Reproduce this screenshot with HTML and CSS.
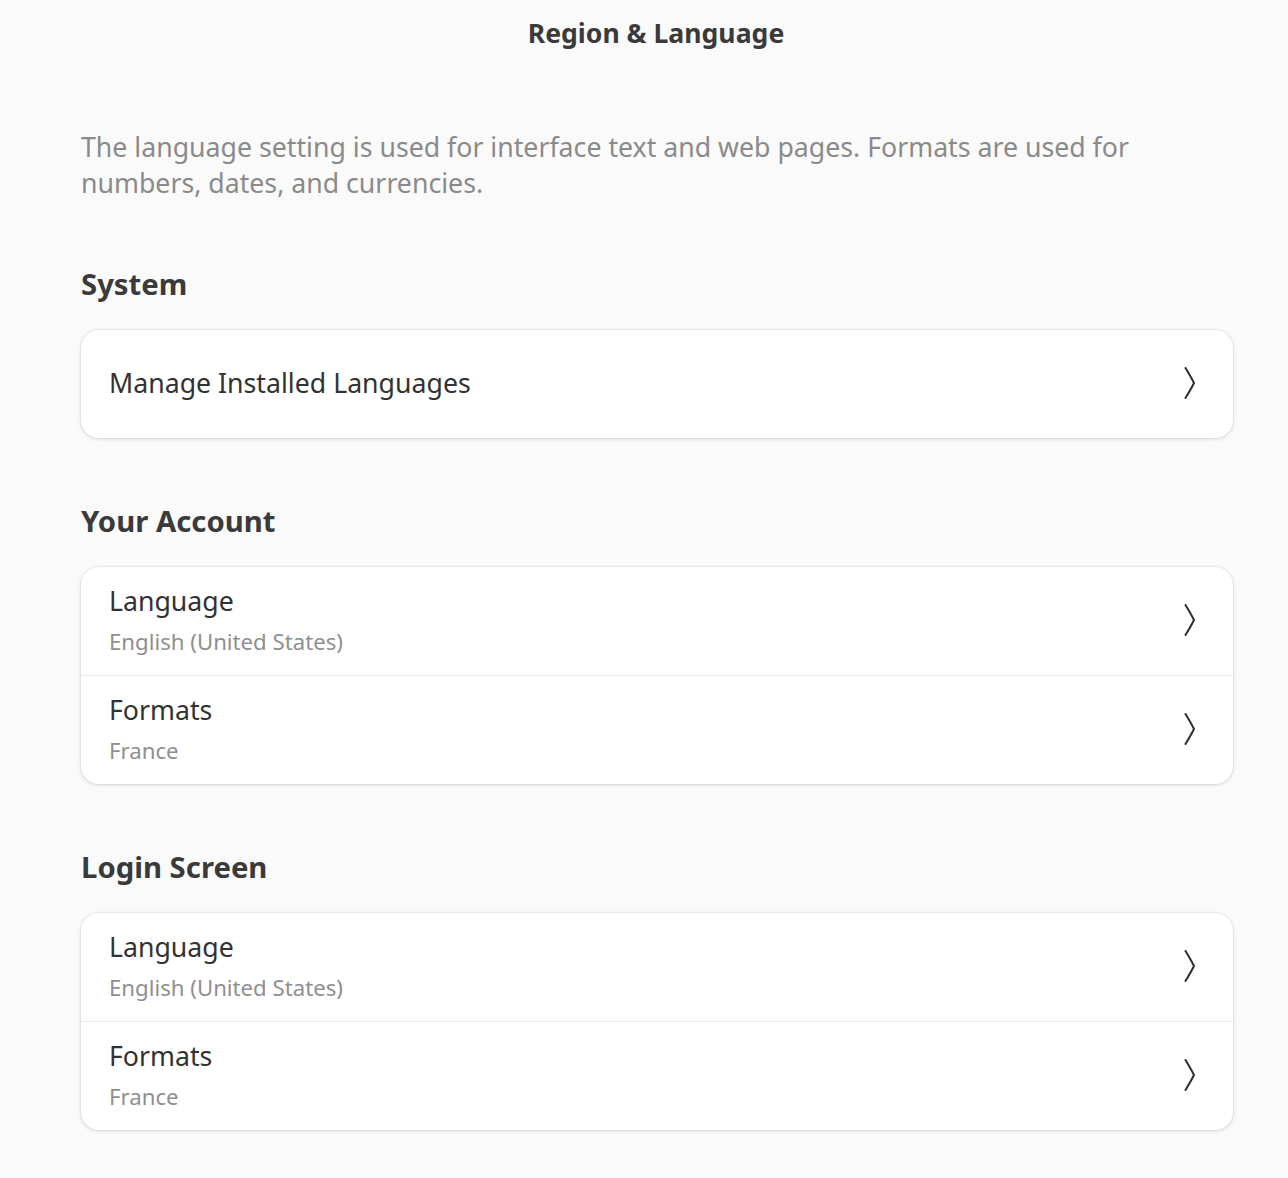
FILE: index.html
```html
<!DOCTYPE html>
<html lang="en">
<head>
    <meta charset="UTF-8">
    <meta name="viewport" content="width=device-width, initial-scale=1.0">
    <title>Region &amp; Language</title>
    <link rel="stylesheet" href="styles.css">
</head>
<body>
    <header class="titlebar">
        <h1 class="title">Region &amp; Language</h1>
    </header>

    <main class="content">
        <p class="intro">The language setting is used for interface text and web pages. Formats are used for numbers, dates, and currencies.</p>

        <section class="group">
            <h2 class="group-title">System</h2>
            <div class="card">
                <div class="row row-single">
                    <span class="row-title">Manage Installed Languages</span>
                    <svg class="chevron" width="12" height="32" viewBox="0 0 12 32"><path d="M1.5 1 Q7 10 10 16 Q7 22 1.5 31" /></svg>
                </div>
            </div>
        </section>

        <section class="group">
            <h2 class="group-title">Your Account</h2>
            <div class="card">
                <div class="row">
                    <div class="row-text">
                        <span class="row-title">Language</span>
                        <span class="row-sub">English (United States)</span>
                    </div>
                    <svg class="chevron" width="12" height="32" viewBox="0 0 12 32"><path d="M1.5 1 Q7 10 10 16 Q7 22 1.5 31" /></svg>
                </div>
                <div class="row">
                    <div class="row-text">
                        <span class="row-title">Formats</span>
                        <span class="row-sub">France</span>
                    </div>
                    <svg class="chevron" width="12" height="32" viewBox="0 0 12 32"><path d="M1.5 1 Q7 10 10 16 Q7 22 1.5 31" /></svg>
                </div>
            </div>
        </section>

        <section class="group">
            <h2 class="group-title">Login Screen</h2>
            <div class="card">
                <div class="row">
                    <div class="row-text">
                        <span class="row-title">Language</span>
                        <span class="row-sub">English (United States)</span>
                    </div>
                    <svg class="chevron" width="12" height="32" viewBox="0 0 12 32"><path d="M1.5 1 Q7 10 10 16 Q7 22 1.5 31" /></svg>
                </div>
                <div class="row">
                    <div class="row-text">
                        <span class="row-title">Formats</span>
                        <span class="row-sub">France</span>
                    </div>
                    <svg class="chevron" width="12" height="32" viewBox="0 0 12 32"><path d="M1.5 1 Q7 10 10 16 Q7 22 1.5 31" /></svg>
                </div>
            </div>
        </section>
    </main>
</body>
</html>
```

FILE: styles.css
```css
body, html {
    margin: 0;
    padding: 0;
    background: #fafafa;
    font-family: "Noto Sans", sans-serif;
    color: #323232;
}

.titlebar {
    height: 66px;
    padding-left: 24px;
    display: flex;
    align-items: center;
    justify-content: center;
}

.title {
    margin: 0;
    font-size: 26.6px;
    font-weight: 700;
    line-height: 36px;
    color: #3a3a3a;
}

.content {
    width: 1152px;
    margin-left: 81px;
    padding-bottom: 40px;
}

.intro {
    margin: 63px 0 0;
    font-size: 26.7px;
    line-height: 36px;
    color: #8a8a8a;
}

.group {
    margin-top: 63px;
}

.group-title {
    margin: 0 0 26px;
    font-size: 29.3px;
    font-weight: 700;
    line-height: 40px;
    color: #3a3a3a;
}

.card {
    background: #fff;
    border-radius: 18px;
    box-shadow: 0 0 0 1px rgba(0, 0, 0, 0.04), 0 1px 4px rgba(0, 0, 0, 0.13);
    overflow: hidden;
}

.row {
    display: flex;
    align-items: center;
    justify-content: space-between;
    padding: 16px 37px 18px 28px;
    border-top: 1px solid #e8e8e8;
}

.row:first-child {
    border-top: none;
}

.row-single {
    height: 108px;
    padding-top: 0;
    padding-bottom: 2px;
    box-sizing: border-box;
}

.row-text {
    display: flex;
    flex-direction: column;
}

.row-title {
    font-size: 26.7px;
    line-height: 36px;
    color: #323232;
}

.row-sub {
    margin-top: 8px;
    font-size: 22.2px;
    line-height: 30px;
    color: #8f8f8f;
}

.chevron {
    fill: none;
    stroke: #2e2e2e;
    stroke-width: 2;
    stroke-linecap: round;
    stroke-linejoin: round;
}
```
